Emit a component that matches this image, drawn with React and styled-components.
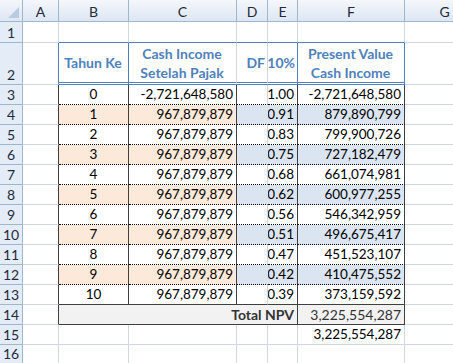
import React from 'react'
import styled, { createGlobalStyle } from 'styled-components'

const GRID = '#d0d7e5'
const HEAD_LINE = '#9eb6ce'
const DARK = '#3f3f3f'
const BLUE = '#4f81bd'
const PEACH = '#fde9d9'
const SKY = '#dbe5f1'
const GRAY = '#f2f2f2'

const COLS = ['A', 'B', 'C', 'D', 'E', 'F', 'G']

const df = ['1.00', '0.91', '0.83', '0.75', '0.68', '0.62', '0.56', '0.51', '0.47', '0.42', '0.39']
const pv = [
    '-2,721,648,580', '879,890,799', '799,900,726', '727,182,479', '661,074,981',
    '600,977,255', '546,342,959', '496,675,417', '451,523,107', '410,475,552', '373,159,592',
]

const GlobalStyle = createGlobalStyle`
    body{
        margin: 0;
        background: #fff;
        overflow: hidden;
    }
`

const App = () => {
    const dataRows = df.map((d, i) => {
        const shaded = i % 2 === 1
        const last = i === df.length - 1
        const bottom = last ? `1px solid ${DARK}` : '1px dotted #000'
        const rowNo = i + 3
        return (
            <React.Fragment key={rowNo}>
                <RowHead>{rowNo}</RowHead>
                <Cell $right={DARK} />
                <Cell $bg={shaded ? PEACH : ''} $right={DARK} $bottom={bottom} $align="center">{i}</Cell>
                <Cell $bg={shaded ? PEACH : ''} $right={DARK} $bottom={bottom} $align="flex-end">
                    {i === 0 ? '-2,721,648,580' : '967,879,879'}
                </Cell>
                <Cell $bg={shaded ? SKY : ''} $right={shaded ? SKY : GRID} $bottom={bottom} />
                <Cell $bg={shaded ? SKY : ''} $right={DARK} $bottom={bottom} $align="flex-end">{d}</Cell>
                <Cell $bg={shaded ? SKY : ''} $right={DARK} $bottom={bottom} $align="flex-end">{pv[i]}</Cell>
                <Cell />
            </React.Fragment>
        )
    })

    return (
        <>
            <GlobalStyle />
            <Viewport>
                <Sheet>
                    <Corner>
                        <svg width="22" height="21" viewBox="0 0 22 21">
                            <polygon points="19,7 19,18 8,18" fill="#b9cbe2" />
                        </svg>
                    </Corner>
                    {COLS.map(c => <ColHead key={c}>{c}</ColHead>)}

                    <RowHead>1</RowHead>
                    <Cell />
                    <Cell $bottom={`1px solid ${BLUE}`} />
                    <Cell $bottom={`1px solid ${BLUE}`} />
                    <Cell $bottom={`1px solid ${BLUE}`} />
                    <Cell $bottom={`1px solid ${BLUE}`} />
                    <Cell $bottom={`1px solid ${BLUE}`} />
                    <Cell />

                    <RowHead>2</RowHead>
                    <Cell $right={BLUE} />
                    <HeadCell $right={BLUE} $align="center">Tahun Ke</HeadCell>
                    <HeadCell $align="center">Cash Income<br />Setelah Pajak</HeadCell>
                    <HeadCell $align="flex-end">DF</HeadCell>
                    <HeadCell $right={BLUE} $align="flex-end">10%</HeadCell>
                    <HeadCell $right={BLUE} $align="center">Present Value<br />Cash Income</HeadCell>
                    <Cell />

                    {dataRows}

                    <RowHead>14</RowHead>
                    <Cell $right={DARK} />
                    <TotalCell $span={4} $align="flex-end" $bold>Total NPV</TotalCell>
                    <TotalCell $align="flex-end">3,225,554,287</TotalCell>
                    <Cell />

                    <RowHead>15</RowHead>
                    <Cell />
                    <Cell />
                    <Cell />
                    <Cell />
                    <Cell />
                    <Cell $align="flex-end">3,225,554,287</Cell>
                    <Cell />

                    <RowHead>16</RowHead>
                    {COLS.map(c => <Cell key={c} />)}
                </Sheet>
            </Viewport>
        </>
    )
}

export default App


const Viewport = styled.div`
    width: 453px;
    height: 363px;
    overflow: hidden;
`
const Sheet = styled.div`
    display: grid;
    grid-template-columns: 23px 36px 70px 108px 31px 30px 107px 80px;
    grid-template-rows: 22px 21px 42px repeat(13, 20px);
    font-family: Lato, "Liberation Sans", sans-serif;
    font-size: 13.5px;
    color: #000;
`
const Corner = styled.div`
    box-sizing: border-box;
    background: linear-gradient(#f4f7fb, #dde6f2);
    border-right: 1px solid ${HEAD_LINE};
    border-bottom: 1px solid ${HEAD_LINE};
    svg{
        display: block;
    }
`
const ColHead = styled.div`
    box-sizing: border-box;
    display: flex;
    align-items: center;
    justify-content: center;
    background: linear-gradient(#f4f7fb, #dde6f2);
    border-right: 1px solid ${HEAD_LINE};
    border-bottom: 1px solid ${HEAD_LINE};
    color: #1e2b3c;
    font-size: 14px;
    padding-top: 1px;
`
const RowHead = styled.div`
    box-sizing: border-box;
    display: flex;
    align-items: flex-end;
    justify-content: center;
    background: #e4ecf7;
    border-right: 1px solid ${HEAD_LINE};
    border-bottom: 1px solid ${HEAD_LINE};
    color: #1e2b3c;
    font-size: 14px;
    line-height: 17px;
    padding-bottom: 1px;
`
const Cell = styled.div`
    box-sizing: border-box;
    display: flex;
    align-items: flex-end;
    justify-content: ${({ $align }) => $align || 'flex-start'};
    padding: 0 3px 1px;
    line-height: 17px;
    white-space: nowrap;
    overflow: hidden;
    background: ${({ $bg }) => $bg || '#fff'};
    border-right: 1px solid ${({ $right }) => $right || GRID};
    border-bottom: ${({ $bottom }) => $bottom || `1px solid ${GRID}`};
`
const HeadCell = styled(Cell)`
    align-items: center;
    text-align: center;
    font-size: 14px;
    line-height: 19px;
    padding: 0 2px 0 1px;
    overflow: visible;
    font-weight: 700;
    color: ${BLUE};
    border-bottom: 3px double ${BLUE};
`
const TotalCell = styled(Cell)`
    grid-column: span ${({ $span }) => $span || 1};
    background: ${GRAY};
    color: #333;
    font-size: 14px;
    font-weight: ${({ $bold }) => ($bold ? 700 : 400)};
    border-right: 1px solid ${DARK};
    border-bottom: 1px solid ${DARK};
`
